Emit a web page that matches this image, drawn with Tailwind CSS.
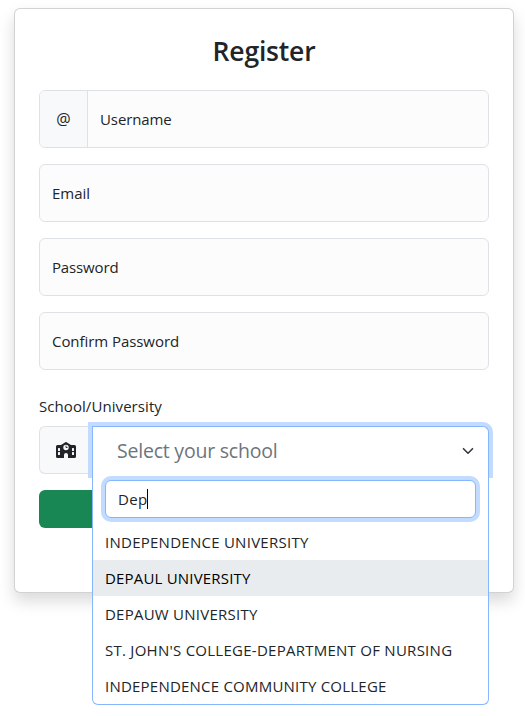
<!DOCTYPE html>
<html lang="en">
<head>
<meta charset="utf-8">
<title>Register</title>
<script src="https://cdn.jsdelivr.net/npm/@tailwindcss/browser@4"></script>
</head>
<body class="h-[716px] overflow-hidden bg-white pt-2 pl-[14px] font-['Segoe_UI','Open_Sans',sans-serif] text-[15px] leading-6 text-[#212529]">
<main class="h-[585px] w-[500px] rounded-md border border-black/[.175] bg-white px-6 pt-6 shadow-[0_8px_16px_rgba(0,0,0,0.15)]">
  <h1 class="h-[57px] text-center text-[26.5px] leading-[36px] font-semibold tracking-[-0.2px]"><span>Register</span></h1>
  <form class="flex flex-col">
    <div class="flex h-[58px] rounded-md border border-[#dee2e6] bg-[#fcfcfd]">
      <span class="flex w-12 items-center justify-center rounded-l-[5px] border-r border-[#dee2e6] bg-[#f8f9fa] text-base"><span>@</span></span>
      <label class="flex flex-1 items-center px-3 tracking-[-0.1px]"><span>Username</span></label>
    </div>
    <label class="mt-4 flex h-[58px] items-center rounded-md border border-[#dee2e6] bg-[#fcfcfd] px-3"><span>Email</span></label>
    <label class="mt-4 flex h-[58px] items-center rounded-md border border-[#dee2e6] bg-[#fcfcfd] px-3 tracking-[-0.15px]"><span>Password</span></label>
    <label class="mt-4 flex h-[58px] items-center rounded-md border border-[#dee2e6] bg-[#fcfcfd] px-3 tracking-[-0.06px]"><span>Confirm Password</span></label>
    <div class="mt-6 h-6 tracking-[0.07px]"><span>School/University</span></div>
    <div class="relative mt-2 flex h-12">
      <span class="flex w-[54px] items-center rounded-l-md border border-r-0 border-[#dee2e6] bg-[#f8f9fa] pl-4">
        <svg class="h-4 w-5" viewBox="0 0 20 16" fill="#212529" fill-rule="evenodd"><path d="M10.600.2a1 1 0 0 0-1.200 0L5 3H1.500A1.500 1.500 0 0 0 0 4.500v10A1.500 1.500 0 0 0 1.500 16H8v-3a2 2 0 0 1 4 0v3h6.500a1.500 1.500 0 0 0 1.500-1.500v-10A1.500 1.500 0 0 0 18.500 3H15ZM2.500 6h1a.5.5 0 0 1 .5.5v2a.5.5 0 0 1-.5.5h-1a.5.5 0 0 1-.5-.5v-2a.5.5 0 0 1 .5-.5Zm14 0h1a.5.5 0 0 1 .5.5v2a.5.5 0 0 1-.5.5h-1a.5.5 0 0 1-.5-.5v-2a.5.5 0 0 1 .5-.5ZM2.500 10h1a.5.5 0 0 1 .5.5v2a.5.5 0 0 1-.5.5h-1a.5.5 0 0 1-.5-.5v-2a.5.5 0 0 1 .5-.5Zm14 0h1a.5.5 0 0 1 .5.5v2a.5.5 0 0 1-.5.5h-1a.5.5 0 0 1-.5-.5v-2a.5.5 0 0 1 .5-.5ZM7.300 5.500a2.700 2.700 0 1 1 5.400 0a2.700 2.700 0 1 1-5.400 0Z"/><path d="M10 4v1.500h1.200" fill="none" stroke="#212529" stroke-width=".9" stroke-linecap="round" stroke-linejoin="round"/></svg>
      </span>
      <div class="absolute top-0 left-[53px] flex h-12 w-[397px] items-center justify-between rounded-tr-md border border-b-0 border-[#86b7fe] bg-white pr-[14px] pl-6 shadow-[0_0_0_4px_#c2dbfe]">
        <span class="text-[19.5px] leading-[30px] tracking-[-0.22px] text-[#6c757d]"><span>Select your school</span></span>
        <svg class="size-3" viewBox="0 0 12 12" fill="none" stroke="#343a40" stroke-width="1.6" stroke-linecap="round" stroke-linejoin="round"><path d="m1.500 3.700 4.500 4.500 4.500-4.500"/></svg>
      </div>
      <div class="absolute top-12 left-[53px] z-10 h-[231px] w-[397px] rounded-b-md border border-t-0 border-[#86b7fe] bg-white pt-1.5">
        <div class="mx-3 flex h-[38px] items-center rounded-md border border-[#86b7fe] bg-white px-3 tracking-[0.3px] shadow-[0_0_0_4px_#c2dbfe]"><span>Dep</span><i class="h-5 w-px bg-black"></i></div>
        <ul class="mt-1.5">
          <li class="h-9 px-3 py-1.5 tracking-[0.26px]"><span>INDEPENDENCE UNIVERSITY</span></li>
          <li class="h-9 bg-[#e9ecef] px-3 py-1.5 tracking-[0.19px] text-black"><span>DEPAUL UNIVERSITY</span></li>
          <li class="h-9 px-3 py-1.5 tracking-[0.24px]"><span>DEPAUW UNIVERSITY</span></li>
          <li class="h-9 px-3 py-1.5 tracking-[0.26px] whitespace-nowrap"><span>ST. JOHN'S COLLEGE-DEPARTMENT OF NURSING</span></li>
          <li class="h-9 px-3 py-1.5 tracking-[0.22px]"><span>INDEPENDENCE COMMUNITY COLLEGE</span></li>
        </ul>
      </div>
    </div>
    <button type="button" aria-label="Register" class="mt-4 h-[38px] rounded-md bg-[#198754]"></button>
  </form>
</main>
</body>
</html>
